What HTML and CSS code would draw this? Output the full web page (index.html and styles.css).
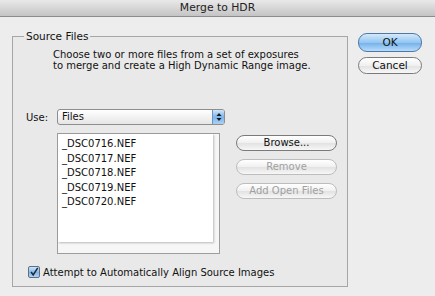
FILE: index.html
```html
<!DOCTYPE html>
<html lang="en">
<head>
    <meta charset="UTF-8">
    <title>Merge to HDR</title>
    <link rel="stylesheet" href="styles.css">
</head>
<body>

    <div class="window">
        <!-- Title bar -->
        <div class="titlebar">Merge to HDR</div>

        <div class="content">
            <fieldset class="group">
                <legend>Source Files</legend>

                <p class="desc">Choose two or more files from a set of exposures<br>to merge and create a High Dynamic Range image.</p>

                <div class="use-row">
                    <span class="use-label">Use:</span>
                    <div class="popup">
                        <span class="popup-text">Files</span>
                        <span class="popup-arrows">
                            <svg width="6" height="10" viewBox="0 0 6 10">
                                <path d="M0.5 4 L3 1 L5.5 4 Z" fill="#1a1a1a"/>
                                <path d="M0.5 6 L3 9 L5.5 6 Z" fill="#1a1a1a"/>
                            </svg>
                        </span>
                    </div>
                </div>

                <div class="files-row">
                    <div class="list">
                        <div class="list-inner">
                            <div class="item">_DSC0716.NEF</div>
                            <div class="item">_DSC0717.NEF</div>
                            <div class="item">_DSC0718.NEF</div>
                            <div class="item">_DSC0719.NEF</div>
                            <div class="item">_DSC0720.NEF</div>
                        </div>
                    </div>
                    <div class="side-buttons">
                        <div class="btn">Browse...</div>
                        <div class="btn disabled">Remove</div>
                        <div class="btn disabled">Add Open Files</div>
                    </div>
                </div>

                <div class="check-row">
                    <span class="checkbox">
                        <svg width="12" height="12" viewBox="0 0 12 12">
                            <path d="M2.5 6 L5 9.5 L10.5 1" fill="none" stroke="#1b2a3a" stroke-width="1.8"/>
                        </svg>
                    </span>
                    <span>Attempt to Automatically Align Source Images</span>
                </div>
            </fieldset>

            <!-- OK / Cancel -->
            <div class="main-buttons">
                <div class="btn wide default">OK</div>
                <div class="btn wide">Cancel</div>
            </div>
        </div>
    </div>

</body>
</html>
```

FILE: styles.css
```css
/* styles.css */

body {
    margin: 0;
    padding: 0;
    background-color: #ededed;
    font-family: "DejaVu Sans", sans-serif;
    font-size: 10px;
    color: #111;
}

.window {
    width: 435px;
    height: 296px;
    overflow: hidden;
}

/* Title bar */
.titlebar {
    box-sizing: border-box;
    height: 17px;
    line-height: 16px;
    text-align: center;
    font-size: 10.8px;
    color: #222;
    background: linear-gradient(#e9e9e9, #c4c4c4);
    border-bottom: 1px solid #8c8c8c;
}

.content {
    display: flex;
    padding: 13px 0 0 12px;
    gap: 10px;
}

/* Group box */
.group {
    box-sizing: border-box;
    width: 336px;
    height: 257px;
    margin: 0;
    padding: 0 0 0 13px;
    border: 1px solid #a6a6a6;
    background-color: #e9e9e9;
}

.group legend {
    padding: 0 2px;
    margin-left: -2px;
    line-height: 13px;
    font-size: 10.5px;
}

.desc {
    margin: 6px 0 0 27px;
    line-height: 11px;
}

.use-row {
    display: flex;
    align-items: center;
    margin-top: 38px;
}

.use-label {
    width: 31px;
}

.popup {
    box-sizing: border-box;
    display: flex;
    width: 168px;
    height: 16px;
    border: 1px solid #8e8e8e;
    border-radius: 3px;
    background: linear-gradient(#ffffff, #e6e6e6);
    overflow: hidden;
}

.popup-text {
    flex: 1;
    padding-left: 4px;
    line-height: 14px;
}

.popup-arrows {
    display: flex;
    align-items: center;
    justify-content: center;
    width: 11px;
    border-left: 1px solid #6c93bf;
    background: linear-gradient(#cfe5fa, #7db5ea 50%, #a9d1f5);
}

.files-row {
    display: flex;
    gap: 16px;
    margin: 8px 0 0 31px;
}

.list {
    box-sizing: border-box;
    width: 163px;
    height: 121px;
    border: 1px solid #9d9d9d;
    background-color: #f6f6f6;
    padding: 0 6px 11px 0;
}

.list-inner {
    height: 100%;
    background-color: #fff;
    padding: 3px 0 0 4px;
    box-sizing: border-box;
    box-shadow: 1px 1px 2px rgba(0, 0, 0, 0.25);
}

.item {
    line-height: 14.6px;
}

.side-buttons {
    display: flex;
    flex-direction: column;
    gap: 8px;
    margin-top: 2px;
}

/* Aqua style buttons */
.btn {
    box-sizing: border-box;
    width: 101px;
    height: 16px;
    line-height: 14px;
    text-align: center;
    border: 1px solid #7a7a7a;
    border-radius: 9px;
    background: linear-gradient(#ffffff, #f0f0f0 50%, #e2e2e2 51%, #f7f7f7);
}

.btn.disabled {
    color: #a0a0a0;
    border-color: #bdbdbd;
}

.main-buttons {
    display: flex;
    flex-direction: column;
    gap: 5px;
    padding-top: 3px;
}

.btn.wide {
    width: 64px;
    height: 17px;
    line-height: 15px;
    font-size: 10.5px;
}

.btn.default {
    height: 19px;
    line-height: 17px;
    border-color: #4f78a8;
    background: linear-gradient(#d4e9fb, #94c6f1 50%, #6fb0ec 51%, #b9dcf9);
}

.check-row {
    display: flex;
    align-items: center;
    gap: 3px;
    margin: 12px 0 0 2px;
}

.checkbox {
    box-sizing: border-box;
    display: flex;
    align-items: center;
    justify-content: center;
    width: 12px;
    height: 12px;
    border: 1px solid #5d6f84;
    border-radius: 2px;
    background: linear-gradient(#cfe4f8, #83b7e6 55%, #aed3f4);
}
```
